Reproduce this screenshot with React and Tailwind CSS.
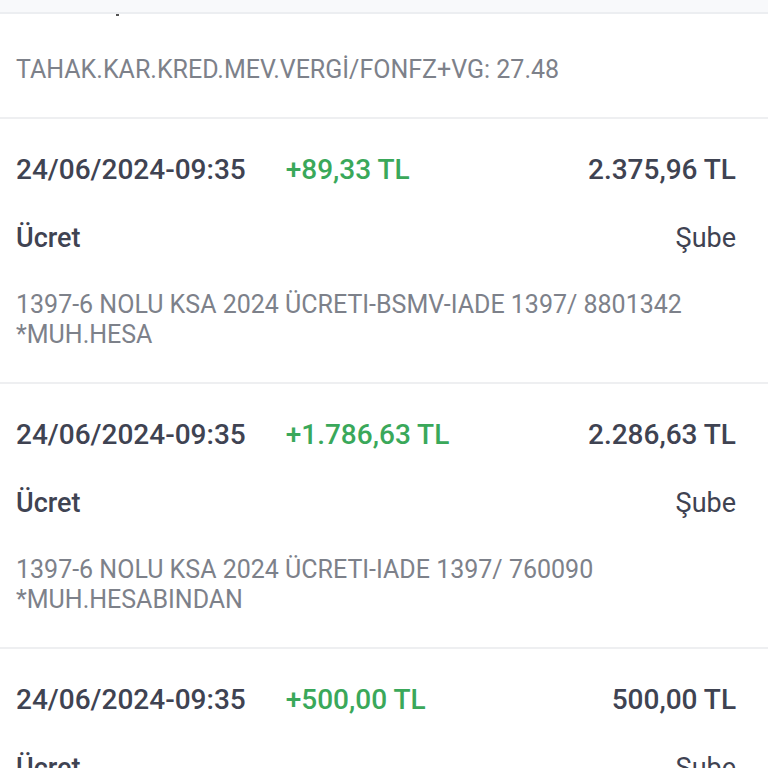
import React from "react";

const rows = [
  {
    date: "24/06/2024-09:35",
    amount: "+89,33 TL",
    balance: "2.375,96 TL",
    desc: ["1397-6 NOLU KSA 2024 ÜCRETI-BSMV-IADE 1397/ 8801342", "*MUH.HESA"],
  },
  {
    date: "24/06/2024-09:35",
    amount: "+1.786,63 TL",
    balance: "2.286,63 TL",
    desc: ["1397-6 NOLU KSA 2024 ÜCRETI-IADE 1397/ 760090", "*MUH.HESABINDAN"],
  },
  {
    date: "24/06/2024-09:35",
    amount: "+500,00 TL",
    balance: "500,00 TL",
    desc: ["1397-6 NOLU KSA 2024 ÜCRETI-IADE 1397/ 760090", "*MUH.HESABINDAN"],
  },
];

function Row({ r }) {
  return (
    <div className="pl-4 pr-8 pt-[34px] pb-[32px] border-b-2 border-[#eeeff1]">
      <div className="flex items-center h-[34px] text-[28px] font-medium leading-[34px]">
        <span className="text-[#3f4352]">{r.date}</span>
        <span className="ml-[40px] text-[#3aa85a]">{r.amount}</span>
        <span className="ml-auto text-[#3f4352]">{r.balance}</span>
      </div>
      <div className="flex items-center justify-between h-[34px] mt-[34px] text-[27px] leading-[34px] text-[#3f4352]">
        <span className="font-medium">Ücret</span>
        <span>Şube</span>
      </div>
      <div className="mt-[35px] text-[25px] leading-[30px] text-[#7d818a]">
        {r.desc.map((l, i) => (
          <div key={i} className="whitespace-nowrap">{l}</div>
        ))}
      </div>
    </div>
  );
}

export default function App() {
  return (
    <div
      className="w-[768px] h-[768px] overflow-hidden bg-white"
      style={{ fontFamily: "Roboto, 'Noto Sans', sans-serif" }}
    >
      <div className="h-[14px] bg-[#f8f9fb] border-b-2 border-[#eceef1]" />
      <div className="pl-4 pr-8 pt-[41px] pb-[32px] border-b-2 border-[#eeeff1] relative">
        <div className="absolute left-[116px] top-0 w-[3px] h-[2px] bg-[#555]" />
        <div className="text-[25px] leading-[30px] text-[#7d818a] whitespace-nowrap">
          TAHAK.KAR.KRED.MEV.VERGİ/FONFZ+VG: 27.48
        </div>
      </div>
      {rows.map((r, i) => (
        <Row key={i} r={r} />
      ))}
    </div>
  );
}
